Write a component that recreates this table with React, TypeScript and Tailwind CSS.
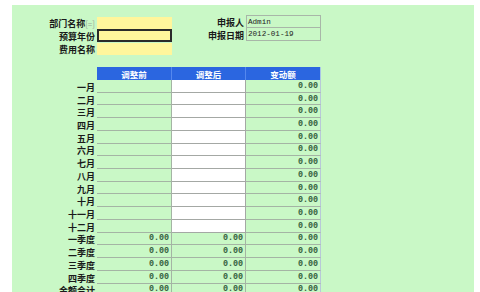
import React from "react";

const months = ["一月","二月","三月","四月","五月","六月","七月","八月","九月","十月","十一月","十二月"];
const quarters = ["一季度","二季度","三季度","四季度","金额合计"];

const label = "text-right pr-[2px] pt-[3px] font-bold text-[9px] leading-[12px] text-[#1a1a1a] [font-family:'Noto_Sans_CJK_SC',sans-serif]";
const mono = "[font-family:'Liberation_Mono',monospace] leading-[12px]";

function Num() {
  return <span className={`${mono} text-[8.4px] text-[#35613f] font-bold pr-[2px]`}>0.00</span>;
}

const hdr = "h-[13px] bg-[#2b66e0] flex items-center justify-center text-white font-bold text-[8.5px] leading-[12px] [font-family:'Noto_Sans_CJK_SC',sans-serif] border-r";

export default function App() {
  return (
    <div className="w-[480px] h-[292px] bg-white overflow-hidden">
      <div className="h-[5px]" />
      <div className="ml-[12px] mr-[6px] h-[287px] bg-[#c9f8c6] flex flex-col">
        <div className="flex h-[1px]">
          <div className="w-[85px] bg-[#b9c2b9]" />
          <div className="w-[75px] bg-[#7d8496]" />
          <div className="flex-1 bg-[#b9c2b9]" />
        </div>
        <div className="flex pt-[11px]">
          <div className="flex flex-col">
            <div className="flex items-center h-[13px]">
              <div className={`w-[85px] ${label}`}>部门名称<span className="font-normal text-[#9aa89a] text-[8px]">[=]</span></div>
              <div className="w-[75px] h-[12px] bg-[#fff69c]" />
            </div>
            <div className="flex items-center h-[13px]">
              <div className={`w-[85px] ${label}`}>预算年份</div>
              <div className="w-[75px] h-[13px] bg-[#fff69c] border-2 border-[#2a2a2a]" />
            </div>
            <div className="flex items-center h-[13px]">
              <div className={`w-[85px] ${label}`}>费用名称</div>
              <div className="w-[75px] h-[12px] bg-[#fff69c]" />
            </div>
          </div>
          <div className="flex flex-col -mt-[1px]">
            <div className="flex items-center h-[13px]">
              <div className={`w-[74px] ${label}`}>申报人</div>
              <div className={`w-[75px] h-[13px] border border-[#a8b6a8] flex items-center pl-[1px] ${mono} text-[7.6px] text-[#222]`}>Admin</div>
            </div>
            <div className="flex items-center h-[13px]">
              <div className={`w-[74px] ${label}`}>申报日期</div>
              <div className={`w-[75px] h-[13px] border border-t-0 border-[#a8b6a8] flex items-center pl-[1px] ${mono} text-[7.6px] text-[#222]`}>2012-01-19</div>
            </div>
          </div>
        </div>
        <div className="mt-[12px] grid grid-cols-[85px_75px_74px_75px]">
          <div className="h-[13px]" />
          <div className={`${hdr} border-[#5588ee]`}>调整前</div>
          <div className={`${hdr} border-[#5588ee]`}>调整后</div>
          <div className={`${hdr} border-[#a9c4e8]`}>变动额</div>
          {months.map((m) => (
            <React.Fragment key={m}>
              <div className={`h-[12.73px] flex items-center justify-end ${label}`}>{m}</div>
              <div className="h-[12.73px] border-b border-r border-[#a4b4a4]" />
              <div className="h-[12.73px] bg-white border-b border-r border-[#a4a8a4]" />
              <div className="h-[12.73px] border-b border-r border-[#a4b4a4] border-r-[#b8c8d8] flex items-center justify-end"><Num /></div>
            </React.Fragment>
          ))}
          {quarters.map((m) => (
            <React.Fragment key={m}>
              <div className={`h-[12.73px] flex items-center justify-end ${label}`}>{m}</div>
              <div className="h-[12.73px] border-b border-r border-[#a4b4a4] flex items-center justify-end"><Num /></div>
              <div className="h-[12.73px] border-b border-r border-[#a4b4a4] flex items-center justify-end"><Num /></div>
              <div className="h-[12.73px] border-b border-r border-[#a4b4a4] border-r-[#b8c8d8] flex items-center justify-end"><Num /></div>
            </React.Fragment>
          ))}
        </div>
      </div>
    </div>
  );
}
